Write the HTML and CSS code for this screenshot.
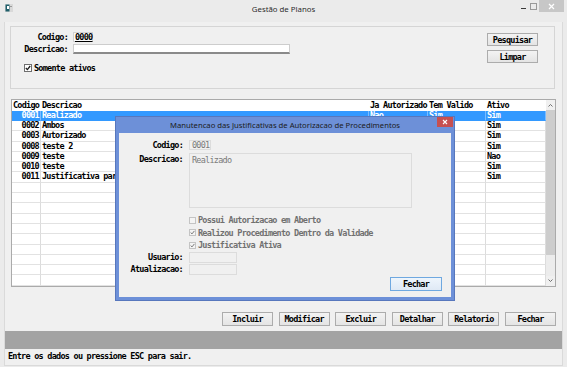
FILE: index.html
```html
<!DOCTYPE html>
<html lang="pt-BR">
<head>
  <meta charset="UTF-8">
  <meta name="viewport" content="width=device-width, initial-scale=1.0">
  <title>Gestão de Planos</title>
  <link rel="stylesheet" href="styles.css">
</head>
<body>
  <div class="window">
    <div class="titlebar">
      <div class="app-icon">
        <svg width="8" height="8" viewBox="0 0 8 8"><rect x="0" y="0" width="8" height="8" fill="#d9d9d9"/><rect x="0.5" y="0.5" width="4" height="7" fill="#1f5f6a"/><rect x="2" y="2" width="2" height="3" fill="#ffffff"/><rect x="5" y="2" width="2" height="1" fill="#9a9a9a"/></svg>
      </div>
      <div class="title">Gestão de Planos</div>
      <div class="controls">
        <span class="ctl min"><i></i></span>
        <span class="ctl max"><i></i></span>
        <span class="ctl close">
          <svg width="7" height="7" viewBox="0 0 7 7"><path d="M1 1 L6 6 M6 1 L1 6" stroke="#ffffff" stroke-width="1.2"/></svg>
        </span>
      </div>
    </div>

    <div class="client">
      <div class="filter-box">
        <div class="filter-form">
          <span class="lbl">Codigo:</span>
          <span class="code-field">0000</span>
          <span class="lbl">Descricao:</span>
          <span class="text-field"></span>
          <label class="check-line">
            <span class="check">
              <svg width="6" height="6" viewBox="0 0 6 6"><path d="M0.8 3 L2.4 4.6 L5.2 1" fill="none" stroke="#1e1e1e" stroke-width="1.3"/></svg>
            </span>
            Somente ativos
          </label>
        </div>
        <div class="filter-actions">
          <button class="btn">Pesquisar</button>
          <button class="btn">Limpar</button>
        </div>
      </div>

      <div class="grid">
        <div class="grid-body">
          <div class="row head">
            <span class="c-cod">Codigo</span><span>Descricao</span><span>Ja Autorizado</span><span>Tem Valido</span><span>Ativo</span>
          </div>
          <div class="row selected">
            <span class="c-cod">0001</span><span>Realizado</span><span>Nao</span><span>Sim</span><span>Sim</span>
          </div>
          <div class="row">
            <span class="c-cod">0002</span><span>Ambos</span><span></span><span></span><span>Sim</span>
          </div>
          <div class="row">
            <span class="c-cod">0003</span><span>Autorizado</span><span></span><span></span><span>Sim</span>
          </div>
          <div class="row">
            <span class="c-cod">0008</span><span>teste 2</span><span></span><span></span><span>Sim</span>
          </div>
          <div class="row">
            <span class="c-cod">0009</span><span>teste</span><span></span><span></span><span>Nao</span>
          </div>
          <div class="row">
            <span class="c-cod">0010</span><span>teste</span><span></span><span></span><span>Sim</span>
          </div>
          <div class="row">
            <span class="c-cod">0011</span><span>Justificativa par</span><span></span><span></span><span>Sim</span>
          </div>
          <div class="row"><span class="c-cod"></span><span></span><span></span><span></span><span></span></div>
          <div class="row"><span class="c-cod"></span><span></span><span></span><span></span><span></span></div>
          <div class="row"><span class="c-cod"></span><span></span><span></span><span></span><span></span></div>
          <div class="row"><span class="c-cod"></span><span></span><span></span><span></span><span></span></div>
          <div class="row"><span class="c-cod"></span><span></span><span></span><span></span><span></span></div>
          <div class="row"><span class="c-cod"></span><span></span><span></span><span></span><span></span></div>
          <div class="row"><span class="c-cod"></span><span></span><span></span><span></span><span></span></div>
          <div class="row"><span class="c-cod"></span><span></span><span></span><span></span><span></span></div>
          <div class="row"><span class="c-cod"></span><span></span><span></span><span></span><span></span></div>
          <div class="row"><span class="c-cod"></span><span></span><span></span><span></span><span></span></div>
        </div>
        <div class="scrollbar">
          <span class="arrow">
            <svg width="5" height="3" viewBox="0 0 5 3"><path d="M0.5 2.5 L2.5 0.5 L4.5 2.5" fill="none" stroke="#606060" stroke-width="0.9"/></svg>
          </span>
          <span class="thumb"></span>
          <span class="track"></span>
          <span class="arrow">
            <svg width="5" height="3" viewBox="0 0 5 3"><path d="M0.5 0.5 L2.5 2.5 L4.5 0.5" fill="none" stroke="#606060" stroke-width="0.9"/></svg>
          </span>
        </div>
      </div>

      <div class="actions">
        <button class="btn">Incluir</button>
        <button class="btn">Modificar</button>
        <button class="btn">Excluir</button>
        <button class="btn">Detalhar</button>
        <button class="btn">Relatorio</button>
        <button class="btn">Fechar</button>
      </div>

      <div class="msgbar"></div>
      <div class="status">Entre os dados ou pressione ESC para sair.</div>
    </div>

    <div class="dialog">
      <div class="dialog-title">
        <span>Manutencao das Justificativas de Autorizacao de Procedimentos</span>
        <span class="dialog-close">
          <svg width="6" height="6" viewBox="0 0 6 6"><path d="M1 1 L5 5 M5 1 L1 5" stroke="#ffffff" stroke-width="1.1"/></svg>
        </span>
      </div>
      <div class="dialog-body">
        <div class="field-row">
          <span class="lbl">Codigo:</span>
          <span class="box box-code">0001</span>
        </div>
        <div class="field-row row-desc">
          <span class="lbl">Descricao:</span>
          <span class="box box-desc">Realizado</span>
        </div>
        <div class="checks">
          <div class="dis-check"><span class="check off"></span>Possui Autorizacao em Aberto</div>
          <div class="dis-check">
            <span class="check off">
              <svg width="5" height="5" viewBox="0 0 5 5"><path d="M0.6 2.5 L2 3.9 L4.4 0.9" fill="none" stroke="#7a7a7a" stroke-width="1"/></svg>
            </span>Realizou Procedimento Dentro da Validade
          </div>
          <div class="dis-check">
            <span class="check off">
              <svg width="5" height="5" viewBox="0 0 5 5"><path d="M0.6 2.5 L2 3.9 L4.4 0.9" fill="none" stroke="#7a7a7a" stroke-width="1"/></svg>
            </span>Justificativa Ativa
          </div>
        </div>
        <div class="field-row row-user">
          <span class="lbl">Usuario:</span>
          <span class="box box-small"></span>
        </div>
        <div class="field-row row-upd">
          <span class="lbl">Atualizacao:</span>
          <span class="box box-small"></span>
        </div>
        <div class="dialog-actions">
          <button class="btn focus">Fechar</button>
        </div>
      </div>
    </div>
  </div>
</body>
</html>
```

FILE: styles.css
```css
body {
  margin: 0;
  padding: 0;
  background-color: #ebebeb;
  font-family: "DejaVu Sans Mono", monospace;
}
.window {
  position: relative;
  width: 567px;
  height: 367px;
  background-color: #ebebeb;
  overflow: hidden;
}

/* title bar */
.titlebar {
  height: 22px;
  display: grid;
  grid-template-columns: 1fr auto 1fr;
}
.app-icon {
  padding: 4px 0 0 5px;
}
.app-icon svg { display: block; }
.title {
  font-family: "Noto Sans", "Liberation Sans", sans-serif;
  font-size: 7.8px;
  line-height: 18px;
  color: #2b2b2b;
}
.controls {
  display: flex;
  justify-content: flex-end;
  align-items: flex-start;
  padding-right: 3px;
}
.ctl {
  width: 10px;
  height: 12px;
  display: flex;
  align-items: center;
  justify-content: center;
}
.ctl.min i {
  display: block;
  width: 5px;
  height: 1px;
  margin-top: 4px;
  background-color: #3a3a3a;
}
.ctl.max i {
  display: block;
  width: 5px;
  height: 5px;
  border: 1px solid #9a9a9a;
}
.ctl.close {
  width: 25px;
  margin-left: 1px;
  background-color: #c7c7c7;
}
.ctl.close svg { display: block; }

/* client area */
.client {
  margin: 0 4px;
  height: 343px;
  background-color: #f0f0f0;
  border: 1px solid #dadada;
  border-top: none;
  display: flex;
  flex-direction: column;
  font-weight: bold;
  font-size: 8.5px;
  letter-spacing: -0.75px;
  color: #000;
}

.filter-box {
  margin: 4px 0 0 5px;
  width: 545px;
  height: 63px;
  box-sizing: border-box;
  border: 1px solid #d5d5d5;
  display: flex;
  justify-content: space-between;
}
.filter-form {
  display: grid;
  grid-template-columns: 57px auto;
  column-gap: 5px;
  row-gap: 2px;
  align-items: center;
  align-content: start;
  padding-top: 5px;
  line-height: 10px;
}
.lbl {
  text-align: right;
}
.code-field {
  width: 20px;
  height: 10px;
  box-sizing: border-box;
  border: 1px solid #d2d2d2;
  background-color: #fafafa;
  text-decoration: underline;
  line-height: 8px;
  padding-left: 1px;
}
.text-field {
  width: 217px;
  height: 10px;
  box-sizing: border-box;
  background-color: #ffffff;
  border: 1px solid #cdcdcd;
  border-bottom: 2px solid #8a8a8a;
}
.check-line {
  grid-column: 1 / 3;
  display: flex;
  align-items: center;
  gap: 2px;
  margin: 7px 0 0 13px;
}
.check {
  width: 8px;
  height: 8px;
  box-sizing: border-box;
  border: 1px solid #6f6f6f;
  background-color: #ffffff;
  display: flex;
  align-items: center;
  justify-content: center;
}
.check svg { display: block; }

.filter-actions {
  display: flex;
  flex-direction: column;
  gap: 4px;
  padding: 6px 16px 0 0;
}
.filter-actions .btn {
  width: 51px;
  height: 13px;
}

.btn {
  font-family: "DejaVu Sans Mono", monospace;
  font-weight: bold;
  font-size: 8.5px;
  letter-spacing: -0.75px;
  color: #000;
  width: 51px;
  height: 14px;
  padding: 0;
  border: 1px solid #acacac;
  background: linear-gradient(#f3f3f3, #e4e4e4);
  line-height: 12px;
}
.btn.focus {
  border-color: #6fa8e0;
  background: linear-gradient(#eef5fc, #dfe9f5);
}

/* grid */
.grid {
  margin: 10px 0 0 6px;
  width: 545px;
  box-sizing: border-box;
  border: 1px solid #aaaaaa;
  background-color: #ffffff;
  display: flex;
}
.grid-body {
  width: 534px;
}
.row {
  display: grid;
  grid-template-columns: 29px 328px 59px 58px 60px;
  height: 10.3px;
  box-sizing: border-box;
}
.row span {
  white-space: nowrap;
  overflow: hidden;
  padding-left: 1px;
  border-bottom: 1px solid #e2e2e2;
  border-right: 1px solid #dcdcdc;
  line-height: 9.3px;
}
.row span.c-cod {
  text-align: right;
  padding: 0 1px 0 0;
}
.row.head {
  height: 10.7px;
}
.row.head span {
  border: none;
  line-height: 10.7px;
}
.row.head span.c-cod {
  text-align: left;
  padding-left: 1px;
}
.row.selected span {
  background-color: #3399ff;
  color: #ffffff;
  border-right-color: #7cbcff;
  border-bottom-color: #3399ff;
}

.scrollbar {
  width: 9px;
  display: flex;
  flex-direction: column;
  background-color: #e9e9e9;
}
.scrollbar .arrow {
  height: 10px;
  display: flex;
  align-items: center;
  justify-content: center;
  background-color: #f0f0f0;
}
.scrollbar .arrow svg { display: block; }
.scrollbar .thumb {
  height: 145px;
  background-color: #cdcdcd;
}
.scrollbar .track {
  flex: 1;
  background-color: #ececec;
}

/* bottom buttons */
.actions {
  display: flex;
  justify-content: flex-end;
  gap: 5.6px;
  margin-top: 25px;
  padding-right: 6px;
}

.msgbar {
  margin-top: 5px;
  height: 18px;
  background-color: #a3a3a3;
}
.status {
  padding: 3px 0 0 3px;
  line-height: 8px;
}

/* dialog */
.dialog {
  position: absolute;
  left: 115px;
  top: 116px;
  width: 340px;
  height: 185px;
  box-sizing: border-box;
  background-color: #6d90d8;
  border: 1px solid #5777bd;
  padding: 0 3px 3px;
  display: flex;
  flex-direction: column;
}
.dialog-title {
  height: 16px;
  display: flex;
  justify-content: center;
  position: relative;
  font-family: "Noto Sans", "Liberation Sans", sans-serif;
  font-size: 7.7px;
  line-height: 16px;
  color: #1c1c1c;
}
.dialog-close {
  position: absolute;
  right: -2px;
  top: 0;
  width: 16px;
  height: 10px;
  background-color: #c75050;
  display: flex;
  align-items: center;
  justify-content: center;
}
.dialog-close svg { display: block; }
.dialog-body {
  flex: 1;
  background-color: #f0f0f0;
  font-weight: bold;
  font-size: 8.5px;
  letter-spacing: -0.75px;
  line-height: 10px;
  padding-top: 7px;
}
.field-row {
  display: flex;
  align-items: flex-start;
  gap: 6px;
}
.field-row .lbl {
  width: 64px;
  flex: none;
}
.box {
  box-sizing: border-box;
  border: 1px solid #dcdcdc;
  background-color: #f0f0f0;
  color: #7a7a7a;
  font-weight: normal;
  padding-left: 2px;
  line-height: 8px;
}
.box-code {
  width: 22px;
  height: 10px;
}
.row-desc {
  margin-top: 3px;
}
.row-desc .lbl {
  padding-top: 1px;
}
.box-desc {
  width: 223px;
  height: 55px;
  padding-top: 2px;
}
.checks {
  margin: 7px 0 0 70px;
  display: flex;
  flex-direction: column;
  gap: 2.5px;
}
.dis-check {
  display: flex;
  align-items: center;
  gap: 2px;
  color: #707070;
  height: 10px;
}
.check.off {
  width: 7px;
  height: 7px;
  border-color: #c4c4c4;
  background-color: #f4f4f4;
}
.row-user {
  margin-top: 2px;
}
.row-upd {
  margin-top: 1.5px;
}
.box-small {
  width: 48px;
  height: 10.5px;
}
.dialog-actions {
  display: flex;
  justify-content: flex-end;
  padding-right: 9px;
  margin-top: 2px;
}
.dialog-actions .btn {
  width: 52px;
}
```
